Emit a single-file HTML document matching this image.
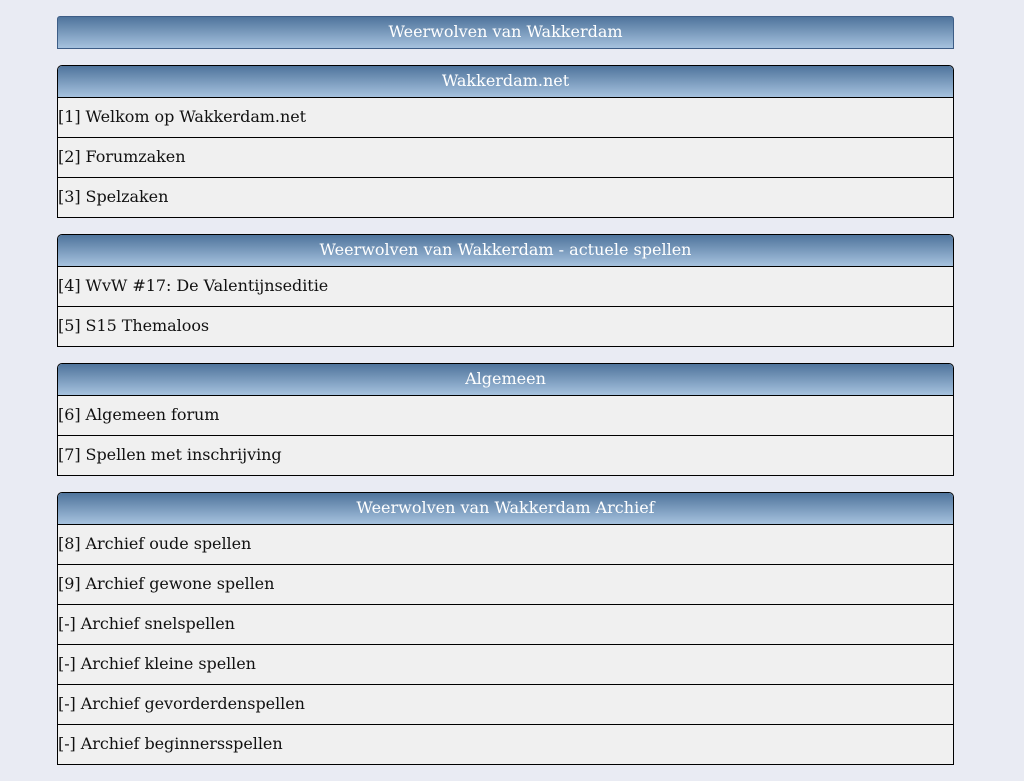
<!DOCTYPE html>
<html><head><meta charset="utf-8"><style>
html,body{margin:0;background:#e9ebf3;font-family:"DejaVu Serif","Liberation Serif",serif;font-size:16px;color:#111;height:768px;overflow:hidden;}
.wrap{position:absolute;left:57px;top:16px;width:897px;}
.hdr{height:31px;line-height:30px;text-align:center;color:#fff;background:linear-gradient(#4f749c,#a6c2de);}
.top{border:1px solid #3d5d86;border-radius:3px 3px 0 0;margin-bottom:16px;}
.box{border:1px solid #000;border-radius:5px 5px 0 0;margin-bottom:16px;background:#f0f0f0;overflow:hidden;}
.box .hdr{border-bottom:1px solid #000;}
.row{height:39px;line-height:38px;border-bottom:1px solid #000;letter-spacing:-0.05px;}
.row:last-child{border-bottom:none;}
</style></head><body><div class="wrap">
<div class="top hdr">Weerwolven van Wakkerdam</div>
<div class="box"><div class="hdr">Wakkerdam.net</div>
<div class="row">[1] Welkom op Wakkerdam.net</div>
<div class="row">[2] Forumzaken</div>
<div class="row">[3] Spelzaken</div></div>
<div class="box"><div class="hdr">Weerwolven van Wakkerdam - actuele spellen</div>
<div class="row">[4] WvW #17: De Valentijnseditie</div>
<div class="row">[5] S15 Themaloos</div></div>
<div class="box"><div class="hdr">Algemeen</div>
<div class="row">[6] Algemeen forum</div>
<div class="row">[7] Spellen met inschrijving</div></div>
<div class="box"><div class="hdr">Weerwolven van Wakkerdam Archief</div>
<div class="row">[8] Archief oude spellen</div>
<div class="row">[9] Archief gewone spellen</div>
<div class="row">[-] Archief snelspellen</div>
<div class="row">[-] Archief kleine spellen</div>
<div class="row">[-] Archief gevorderdenspellen</div>
<div class="row">[-] Archief beginnersspellen</div></div>
</div></body></html>
